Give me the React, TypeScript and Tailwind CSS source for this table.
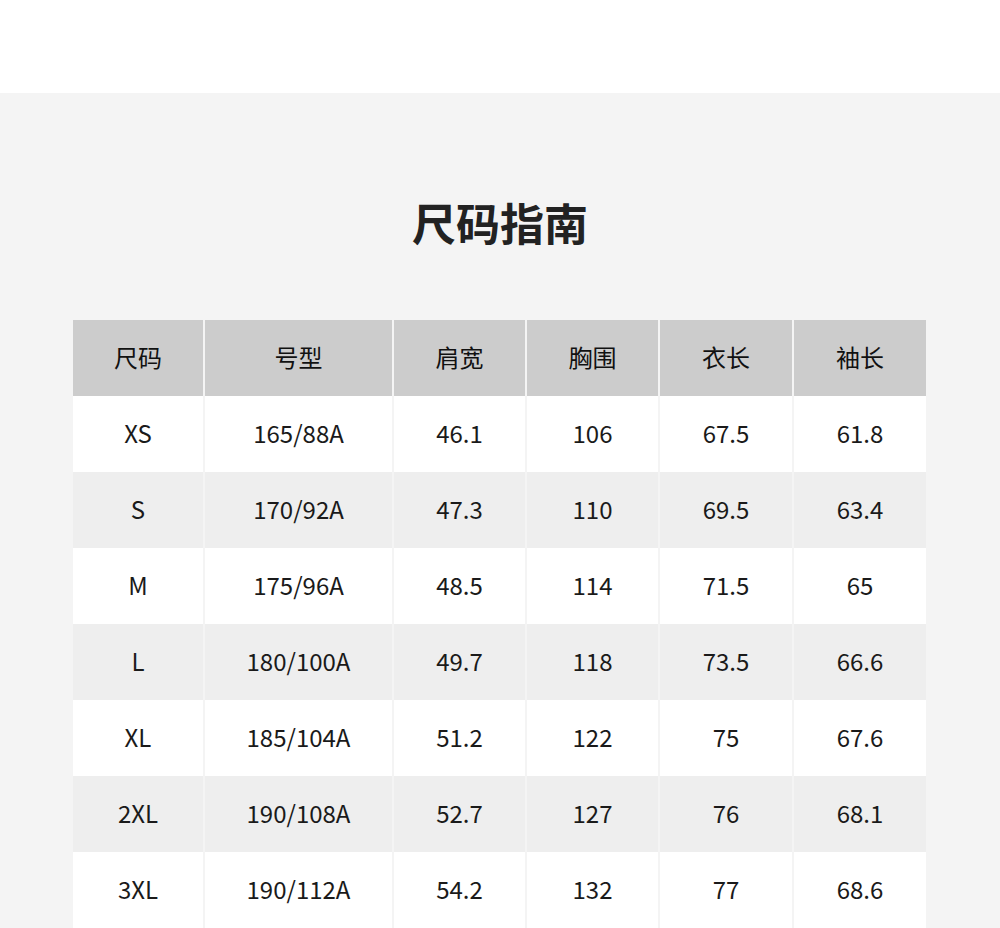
const headers = ['尺码', '号型', '肩宽', '胸围', '衣长', '袖长']

const rows = [
  ['XS', '165/88A', '46.1', '106', '67.5', '61.8'],
  ['S', '170/92A', '47.3', '110', '69.5', '63.4'],
  ['M', '175/96A', '48.5', '114', '71.5', '65'],
  ['L', '180/100A', '49.7', '118', '73.5', '66.6'],
  ['XL', '185/104A', '51.2', '122', '75', '67.6'],
  ['2XL', '190/108A', '52.7', '127', '76', '68.1'],
  ['3XL', '190/112A', '54.2', '132', '77', '68.6'],
]

export default function App() {
  return (
    <div className="min-h-[928px] bg-[#f4f4f4] font-['Noto_Sans_CJK_SC','Noto_Sans',sans-serif]">
      {/* top white band */}
      <div className="h-[93px] bg-white" />

      <div className="pt-[100px] pb-[60px]">
        <h1 className="text-center text-[44px] font-bold leading-[58px] text-[#222]">尺码指南</h1>

        <div className="ml-[73px] mt-[69px] w-[853px]">
          {/* header */}
          <div className="grid grid-cols-[130px_187px_131px_131px_132px_132px] gap-x-[2px]">
            {headers.map((h) => (
              <div key={h} className="flex h-[76px] items-center justify-center bg-[#cccccc] pb-[3px] text-[24px] leading-[24px] text-[#111]">
                {h}
              </div>
            ))}
          </div>

          {/* body */}
          {rows.map((row, i) => (
            <div key={row[0]} className="grid grid-cols-[130px_187px_131px_131px_132px_132px] gap-x-[2px]">
              {row.map((cell, j) => (
                <div
                  key={j}
                  className={
                    'flex h-[76px] items-center justify-center pb-[2px] text-[24px] leading-[24px] text-[#1a1a1a] ' +
                    (i % 2 === 0 ? 'bg-white' : 'bg-[#eeeeee]')
                  }
                >
                  {cell}
                </div>
              ))}
            </div>
          ))}
        </div>
      </div>
    </div>
  )
}
